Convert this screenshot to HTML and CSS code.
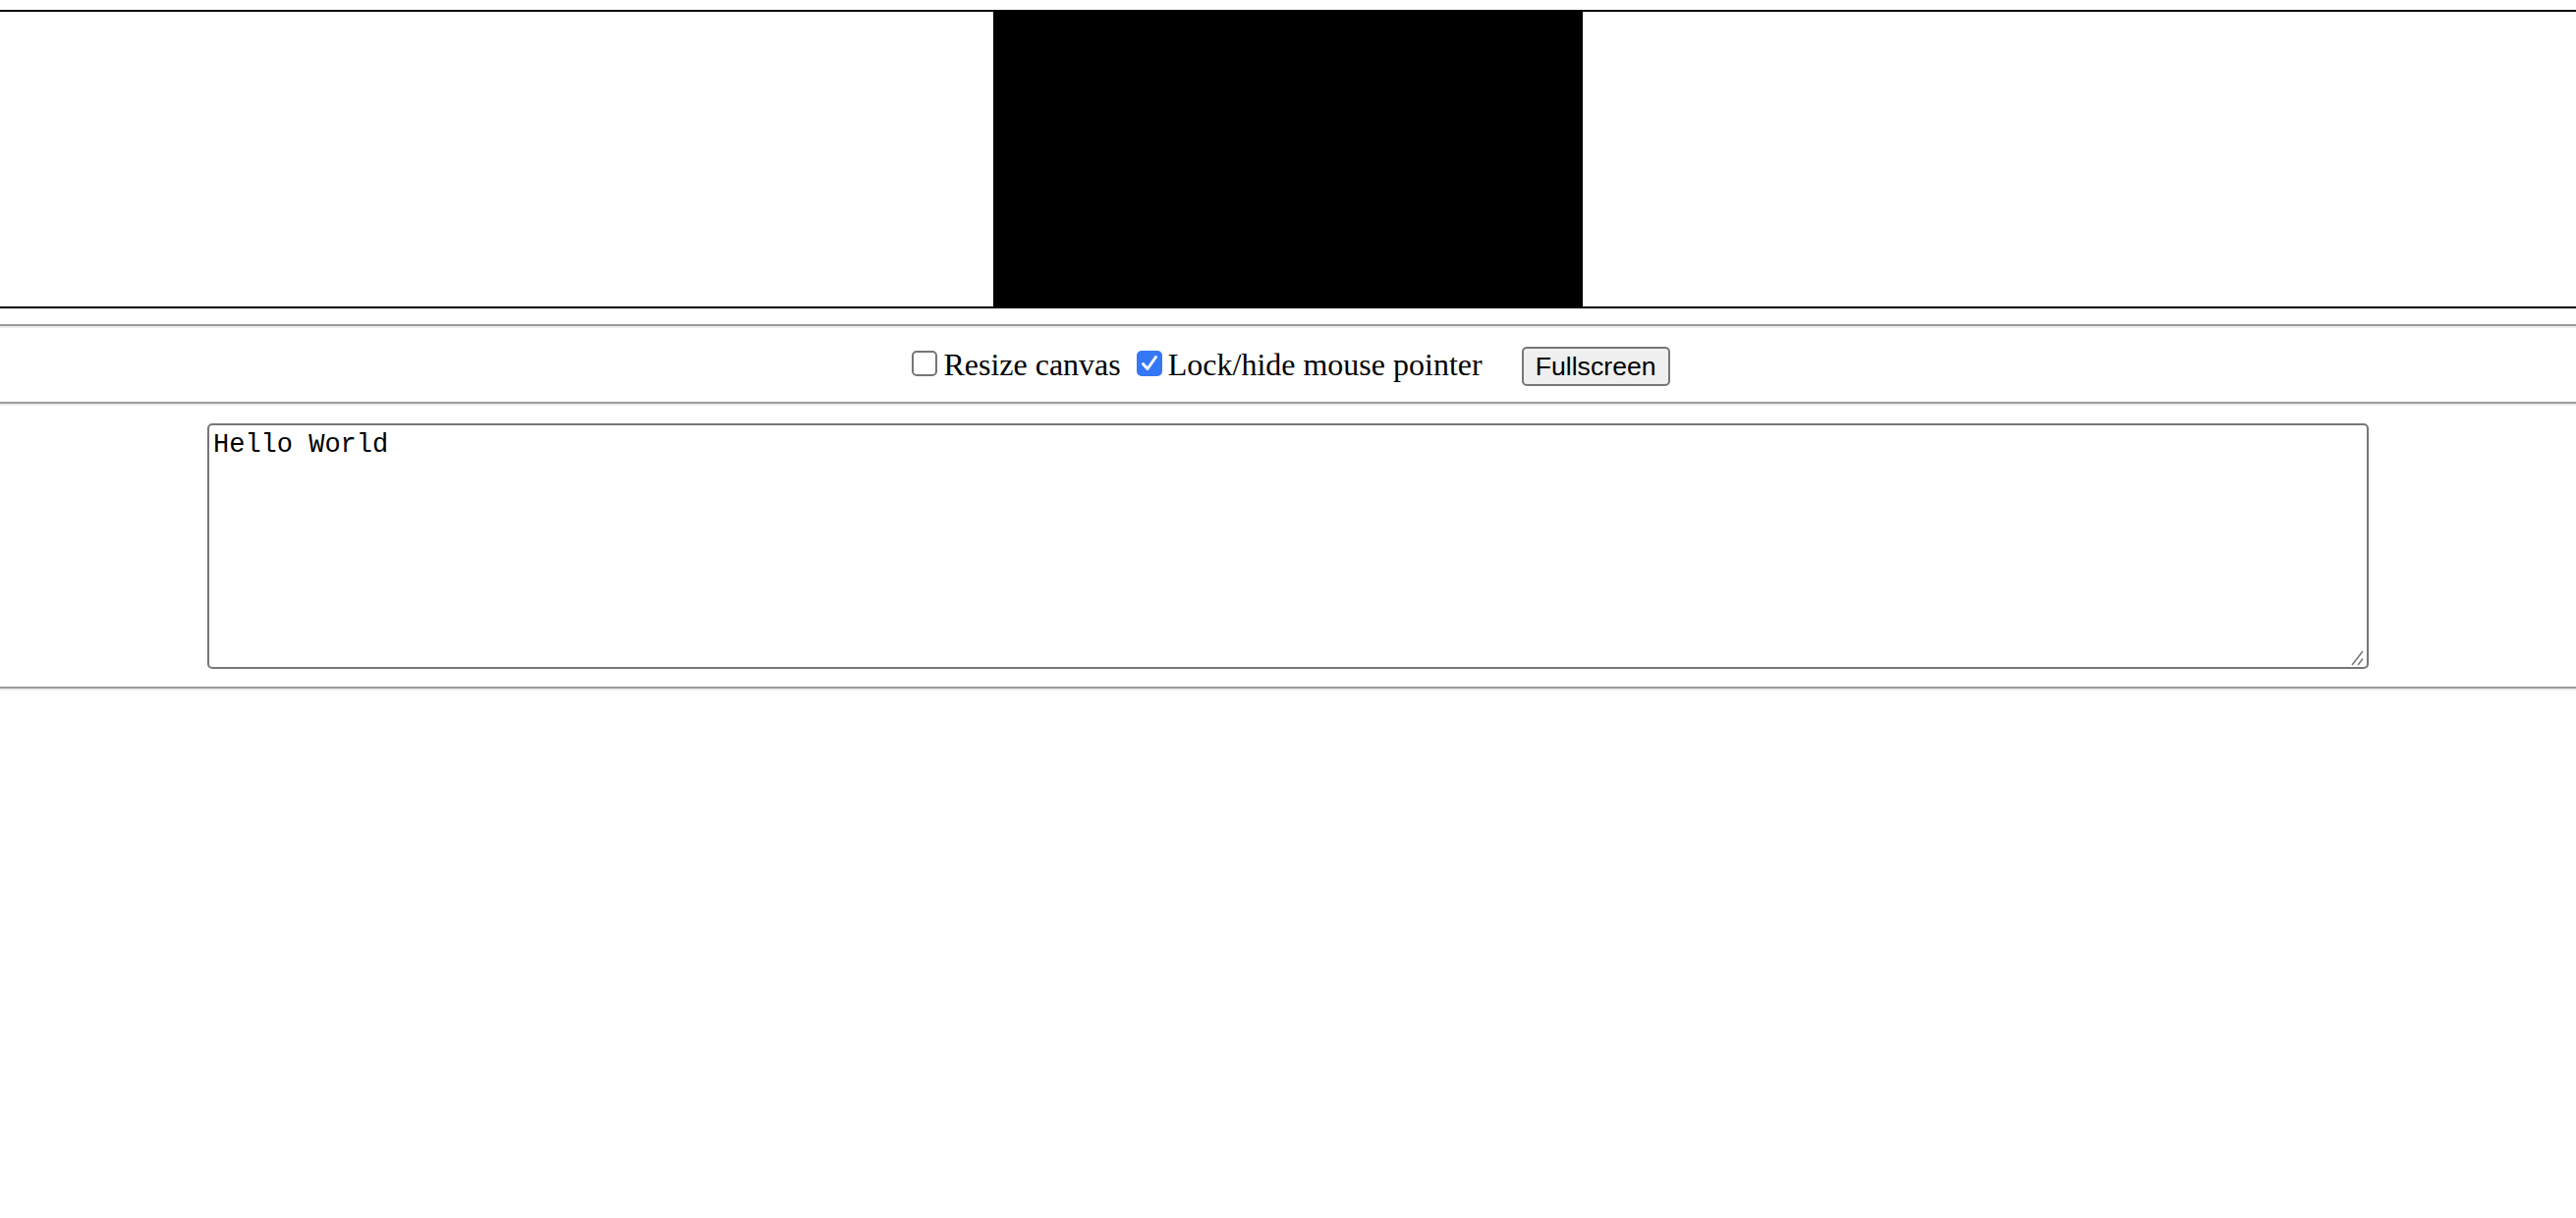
FILE: index.html
```html
<!DOCTYPE html>
<html lang="en">
<head>
<meta charset="utf-8">
<title>Emscripten-Generated Code</title>
<link rel="stylesheet" href="styles.css">
</head>
<body>
  <div class="canvas-border">
    <canvas class="stage" width="600" height="300"></canvas>
  </div>
  <hr class="rule">
  <div class="controls">
    <span class="check" role="checkbox" aria-checked="false"></span>
    <span class="label">Resize canvas</span>
    <span class="check check-on" role="checkbox" aria-checked="true">
      <svg viewBox="0 0 26 26" width="26" height="26" aria-hidden="true"><path d="M6.5 13.5 L11 18.5 L19.5 6.5" fill="none" stroke="#fff" stroke-width="3" stroke-linecap="round" stroke-linejoin="round"/></svg>
    </span>
    <span class="label">Lock/hide mouse pointer</span>
    <button class="btn" type="button">Fullscreen</button>
  </div>
  <hr class="rule">
  <div class="output-wrap">
    <textarea class="output" rows="8">Hello World</textarea>
    <svg class="grip" viewBox="0 0 14 16" width="14" height="16" aria-hidden="true"><path d="M1 15 L12 1 M7 15 L12 8.5" fill="none" stroke="#7a7a7a" stroke-width="1.6"/></svg>
  </div>
  <hr class="rule">
</body>
</html>
```

FILE: styles.css
```css
html, body {
  margin: 0;
  padding: 0;
  background: #fff;
}

body {
  padding-top: 10px;
  font-family: "Liberation Serif", "Times New Roman", serif;
  color: #000;
}

.canvas-border {
  border-top: 2px solid #000;
  border-bottom: 2px solid #000;
}

.stage {
  display: block;
  width: 600px;
  height: 300px;
  margin: 0 auto;
  background: #000;
}

.rule {
  height: 0;
  margin: 16px 0;
  border: 0;
  border-top: 2px solid #9a9a9a;
  border-bottom: 2px solid #ececec;
}

.controls {
  display: flex;
  justify-content: center;
  align-items: flex-start;
  height: 43px;
  font-size: 32px;
  line-height: 40px;
  padding-right: 2px;
}

.check {
  box-sizing: border-box;
  width: 26px;
  height: 26px;
  margin: 7px 6px 0 8px;
  border: 2px solid #767676;
  border-radius: 5px;
  background: #fff;
  flex: none;
}

.check-on {
  border: 0;
  background: #3478f6;
  margin-left: 16px;
}

.check-on svg {
  display: block;
}

.label {
  margin-top: 1px;
  white-space: nowrap;
}

.btn {
  box-sizing: border-box;
  margin: 3px 0 0 40px;
  height: 40px;
  padding: 0 12px;
  font-family: "Liberation Sans", Arial, sans-serif;
  font-size: 26.67px;
  line-height: 36px;
  color: #000;
  background: #efefef;
  border: 2px solid #767676;
  border-radius: 5px;
}

.output-wrap {
  position: relative;
  width: 2200px;
  margin: 18px auto;
}

.output {
  display: block;
  box-sizing: border-box;
  width: 2200px;
  height: 250px;
  margin: 0;
  padding: 5px 4px 4px;
  border: 2px solid #767676;
  border-radius: 5px;
  font-family: "Liberation Mono", "Courier New", monospace;
  font-size: 27px;
  color: #000;
  background: #fff;
  resize: none;
  outline: none;
}

.grip {
  position: absolute;
  right: 4px;
  bottom: 3px;
}
```
